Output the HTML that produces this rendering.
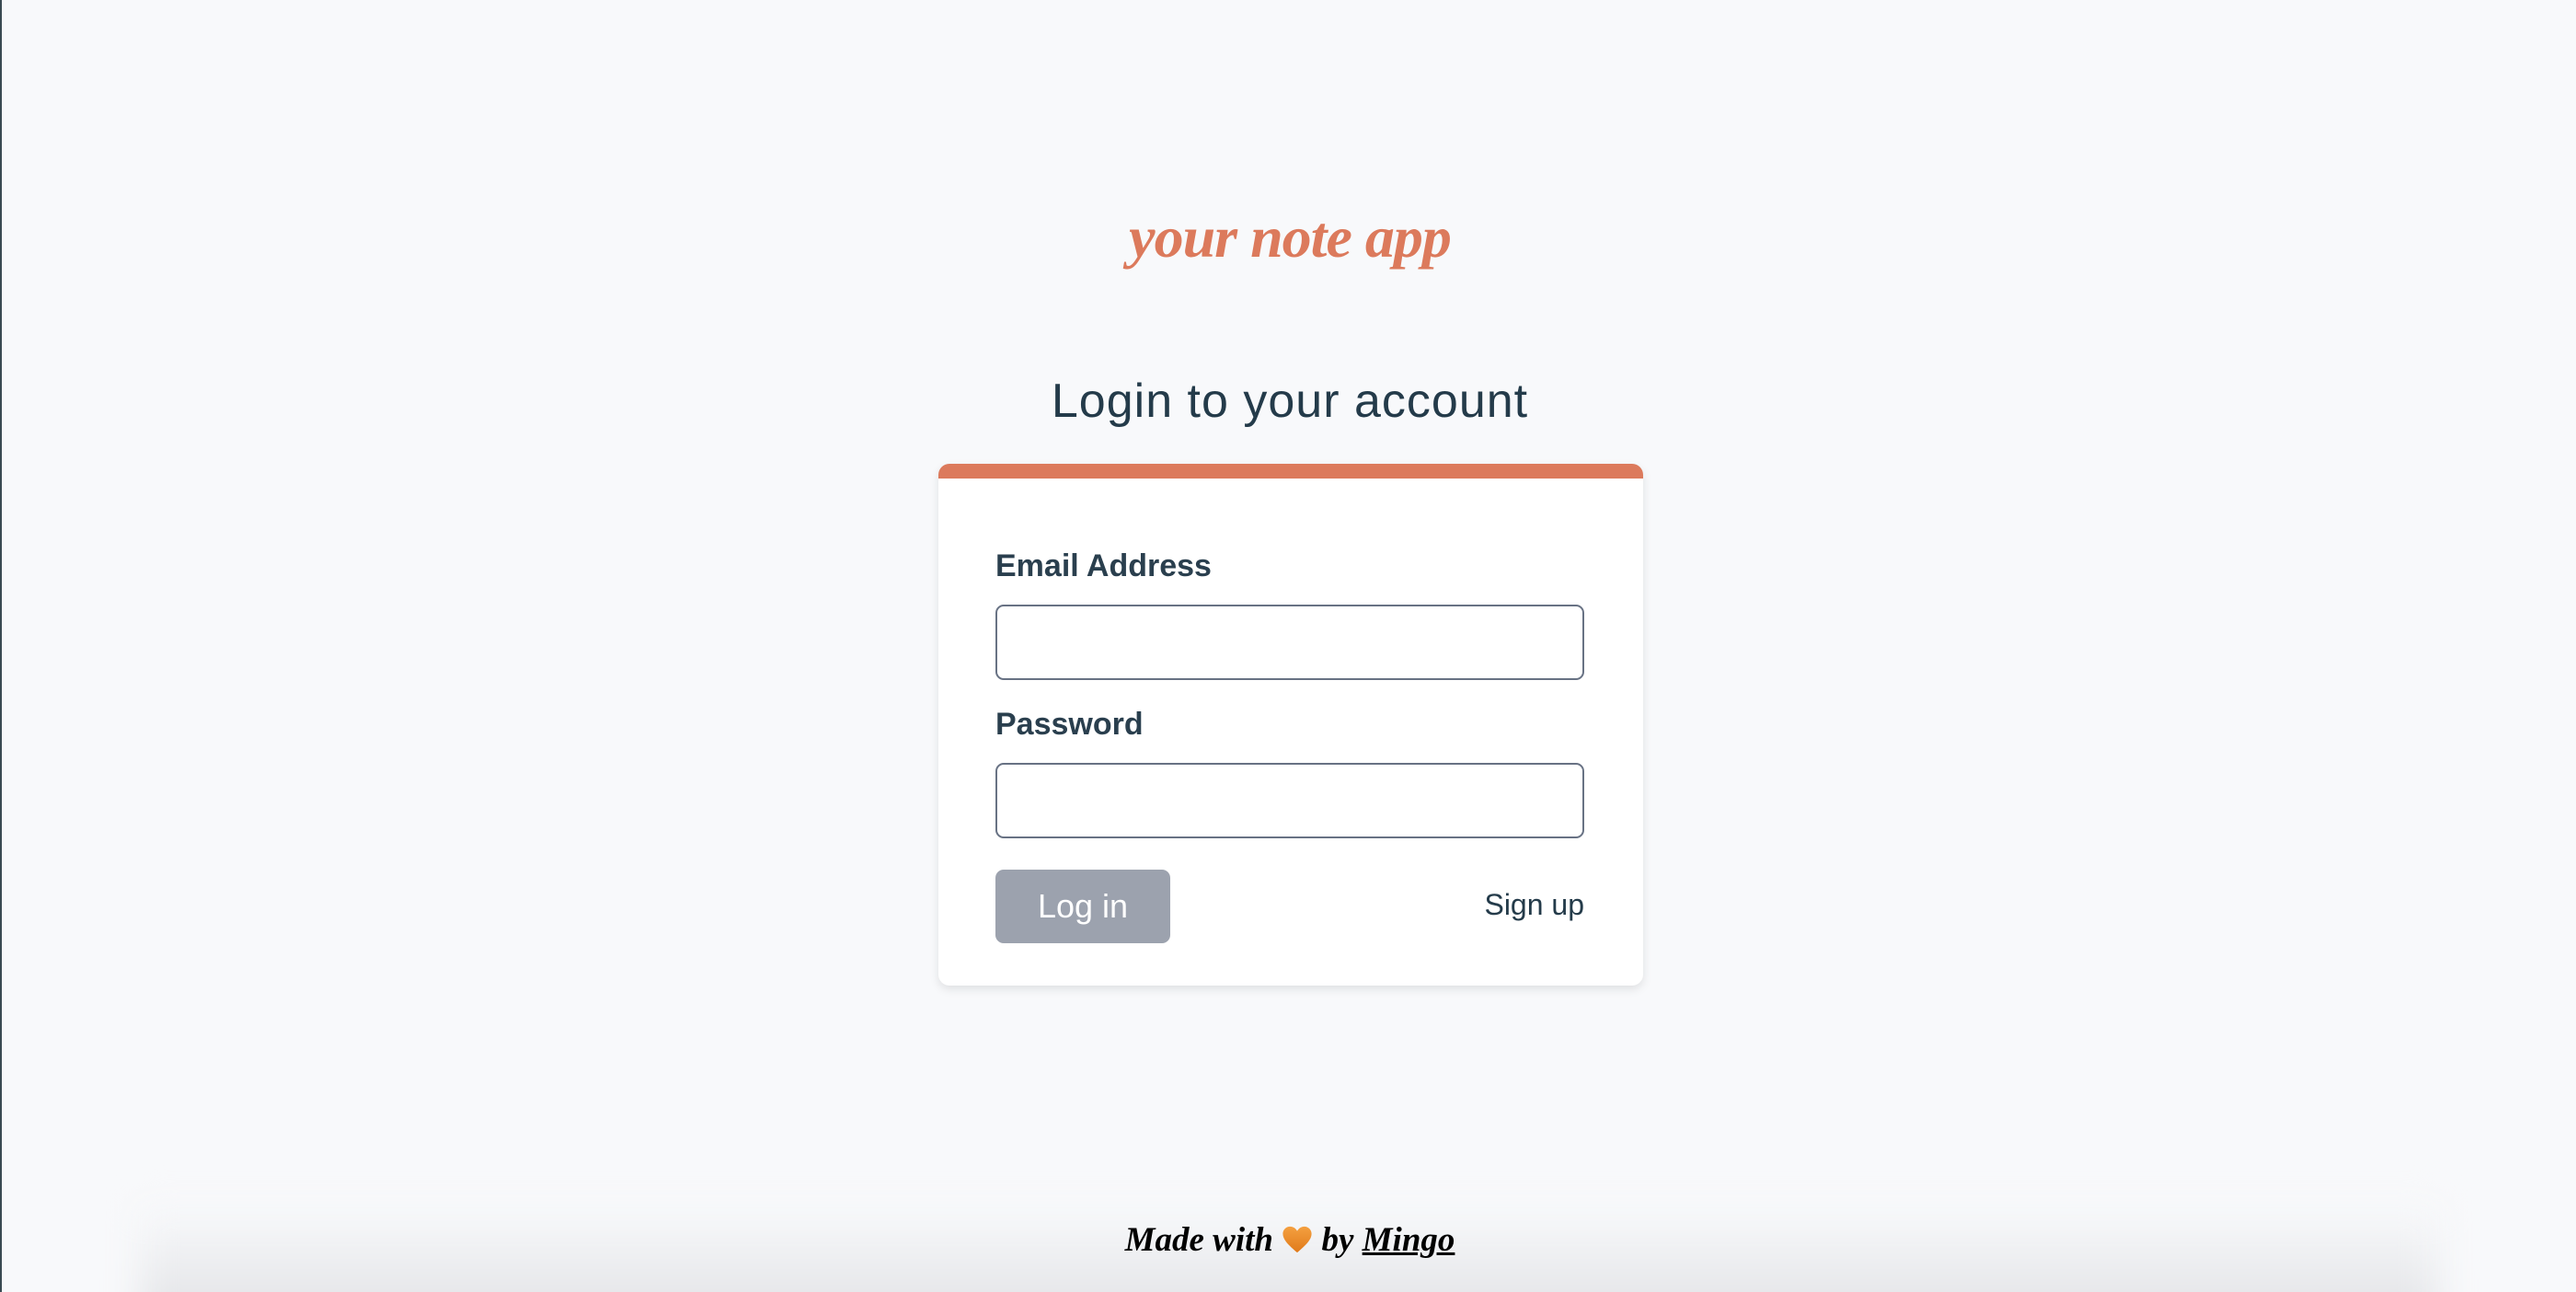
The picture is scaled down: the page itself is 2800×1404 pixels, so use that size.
<!DOCTYPE html>
<html><head><meta charset="utf-8"><style>
*{box-sizing:border-box;margin:0;padding:0}
html,body{width:2800px;height:1404px;overflow:hidden}
body{background:#f8f9fb;font-family:"Liberation Sans",sans-serif;position:relative;border-left:2px solid #3a4a52}
.logo{position:absolute;left:0;width:2800px;top:226px;line-height:1;text-align:center;font-family:"Liberation Serif",serif;font-style:italic;font-weight:bold;font-size:64px;color:#dc7a5c;letter-spacing:-1px}
.h{position:absolute;left:0;width:2800px;top:410px;text-align:center;font-size:52px;color:#243b4a;line-height:1;letter-spacing:1px}
.card{position:absolute;left:1018px;top:504px;width:766px;height:567px;background:#fff;border-radius:12px;border-top:16px solid #dc7a5c;box-shadow:0 4px 10px rgba(0,0,0,.1)}
.lab{position:absolute;left:62px;font-size:34px;line-height:1;font-weight:bold;color:#2a3f4e}
.inp{position:absolute;left:62px;width:640px;height:82px;border:2px solid #687284;border-radius:9px}
.btn{position:absolute;left:62px;top:425px;width:190px;height:80px;background:#9ca2ae;border-radius:9px;color:#fff;font-size:36px;text-align:center;line-height:80px}
.su{position:absolute;right:64px;top:447px;font-size:32px;line-height:1;color:#243b4a}
.shade{position:absolute;left:150px;right:150px;top:1310px;height:140px;background:linear-gradient(#f8f9fb,#dfe0e3);filter:blur(18px)}
.foot{position:absolute;left:0;width:2800px;top:1329px;line-height:1;text-align:center;font-family:"Liberation Serif",serif;font-style:italic;font-weight:bold;font-size:37px;color:#000}
.foot u{text-decoration-thickness:3px}
</style></head><body>
<div class="logo">your note app</div>
<div class="h">Login to your account</div>
<div class="card">
<div class="lab" style="top:78px">Email Address</div>
<div class="inp" style="top:137px"></div>
<div class="lab" style="top:250px">Password</div>
<div class="inp" style="top:309px"></div>
<div class="btn">Log in</div>
<div class="su">Sign up</div>
</div>
<div class="shade"></div>
<div class="foot">Made with <svg width="34" height="32" viewBox="0 0 24 22" style="vertical-align:-4px"><defs><linearGradient id="g" x1="0" y1="0" x2="0" y2="1"><stop offset="0" stop-color="#f4a040"/><stop offset="1" stop-color="#e07a1a"/></linearGradient></defs><path d="M12 21C5 15 1 11 1 6.5 1 3.5 3.5 1 6.5 1 9 1 11 2.5 12 4.5 13 2.5 15 1 17.5 1 20.5 1 23 3.5 23 6.5 23 11 19 15 12 21Z" fill="url(#g)"/></svg> by <u>Mingo</u></div>
</body></html>
